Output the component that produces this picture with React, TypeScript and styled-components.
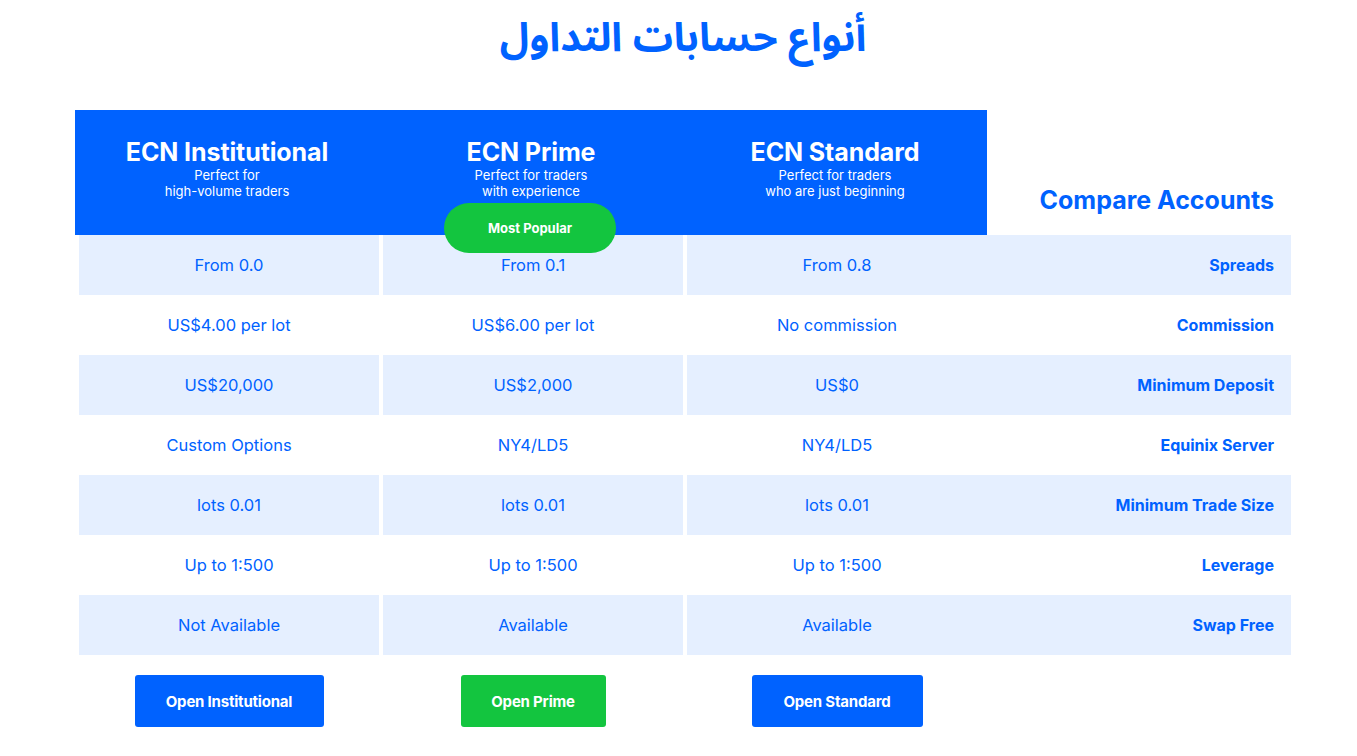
import { createGlobalStyle, styled } from "styled-components";

const Global = createGlobalStyle`
  body {
    margin: 0;
    background: #ffffff;
    font-family: Inter, "Noto Sans", sans-serif;
  }
`;

const BLUE = "#0062ff";
const GREEN = "#13c53f";
const LIGHT = "#e5efff";

const Page = styled.div`
  width: 1216px;
  margin-left: 75px;
`;

const Title = styled.h1`
  margin: 0 0 42px;
  padding-top: 10px;
  text-align: center;
  font-family: "Noto Sans Arabic", "DejaVu Sans", sans-serif;
  font-size: 40px;
  font-weight: 700;
  color: ${BLUE};
  line-height: 58px;
  direction: rtl;
`;

const Grid = styled.div`
  display: grid;
  grid-template-columns: repeat(4, 304px);
`;

const HeadCell = styled.div`
  position: relative;
  height: 125px;
  background: ${BLUE};
  color: #fff;
  text-align: center;
  padding-top: 27px;
  box-sizing: border-box;
`;

const HeadTitle = styled.div`
  font-size: 25px;
  font-weight: 700;
  line-height: 30px;
  letter-spacing: -0.1px;
`;

const HeadSub = styled.div`
  font-size: 13px;
  line-height: 16px;
  white-space: pre-line;
`;

const Popular = styled.div`
  position: absolute;
  left: 65px;
  top: 93px;
  width: 172px;
  height: 50px;
  border-radius: 25px;
  background: ${GREEN};
  color: #fff;
  font-size: 13px;
  font-weight: 700;
  display: flex;
  align-items: center;
  justify-content: center;
  z-index: 2;
`;

const CompareHead = styled.div`
  height: 125px;
  display: flex;
  align-items: flex-end;
  justify-content: flex-end;
  padding: 0 17px 20px 0;
  box-sizing: border-box;
  font-size: 25px;
  font-weight: 700;
  color: ${BLUE};
`;

const Cell = styled.div<{ $shade: boolean }>`
  height: 60px;
  margin-left: 4px;
  background: ${(p) => (p.$shade ? LIGHT : "#fff")};
  color: ${BLUE};
  font-size: 16.5px;
  display: flex;
  align-items: center;
  justify-content: center;
`;

const Label = styled.div<{ $shade: boolean }>`
  height: 60px;
  background: ${(p) => (p.$shade ? LIGHT : "#fff")};
  color: ${BLUE};
  font-size: 16px;
  font-weight: 700;
  display: flex;
  align-items: center;
  justify-content: flex-end;
  padding-right: 17px;
`;

const ButtonCell = styled.div`
  margin-left: 4px;
  padding-top: 20px;
  display: flex;
  justify-content: center;
`;

const Button = styled.button<{ $green?: boolean; $w: number }>`
  width: ${(p) => p.$w}px;
  height: 52px;
  border: none;
  border-radius: 3px;
  background: ${(p) => (p.$green ? GREEN : BLUE)};
  color: #fff;
  font-family: Inter, "Noto Sans", sans-serif;
  font-size: 15px;
  font-weight: 700;
  letter-spacing: -0.2px;
  cursor: pointer;
`;

const accounts = [
  { name: "ECN Institutional", sub: "Perfect for\nhigh-volume traders", btn: "Open Institutional", w: 189 },
  { name: "ECN Prime", sub: "Perfect for traders\nwith experience", btn: "Open Prime", w: 145, popular: true },
  { name: "ECN Standard", sub: "Perfect for traders\nwho are just beginning", btn: "Open Standard", w: 171 },
];

const rows: [string, string, string, string][] = [
  ["From 0.0", "From 0.1", "From 0.8", "Spreads"],
  ["US$4.00 per lot", "US$6.00 per lot", "No commission", "Commission"],
  ["US$20,000", "US$2,000", "US$0", "Minimum Deposit"],
  ["Custom Options", "NY4/LD5", "NY4/LD5", "Equinix Server"],
  ["lots 0.01", "lots 0.01", "lots 0.01", "Minimum Trade Size"],
  ["Up to 1:500", "Up to 1:500", "Up to 1:500", "Leverage"],
  ["Not Available", "Available", "Available", "Swap Free"],
];

function App() {
  return (
    <>
      <Global />
      <Page>
        <Title>أنواع حسابات التداول</Title>
        <Grid>
          {accounts.map((a) => (
            <HeadCell key={a.name}>
              <HeadTitle>{a.name}</HeadTitle>
              <HeadSub>{a.sub}</HeadSub>
              {a.popular && <Popular>Most Popular</Popular>}
            </HeadCell>
          ))}
          <CompareHead>Compare Accounts</CompareHead>

          {rows.map((r, i) => {
            const shade = i % 2 === 0;
            return [
              <Cell key={`${i}-0`} $shade={shade}>{r[0]}</Cell>,
              <Cell key={`${i}-1`} $shade={shade}>{r[1]}</Cell>,
              <Cell key={`${i}-2`} $shade={shade}>{r[2]}</Cell>,
              <Label key={`${i}-3`} $shade={shade}>{r[3]}</Label>,
            ];
          })}

          {accounts.map((a) => (
            <ButtonCell key={a.btn}>
              <Button $w={a.w} $green={a.popular}>{a.btn}</Button>
            </ButtonCell>
          ))}
        </Grid>
      </Page>
    </>
  );
}

export default App;
